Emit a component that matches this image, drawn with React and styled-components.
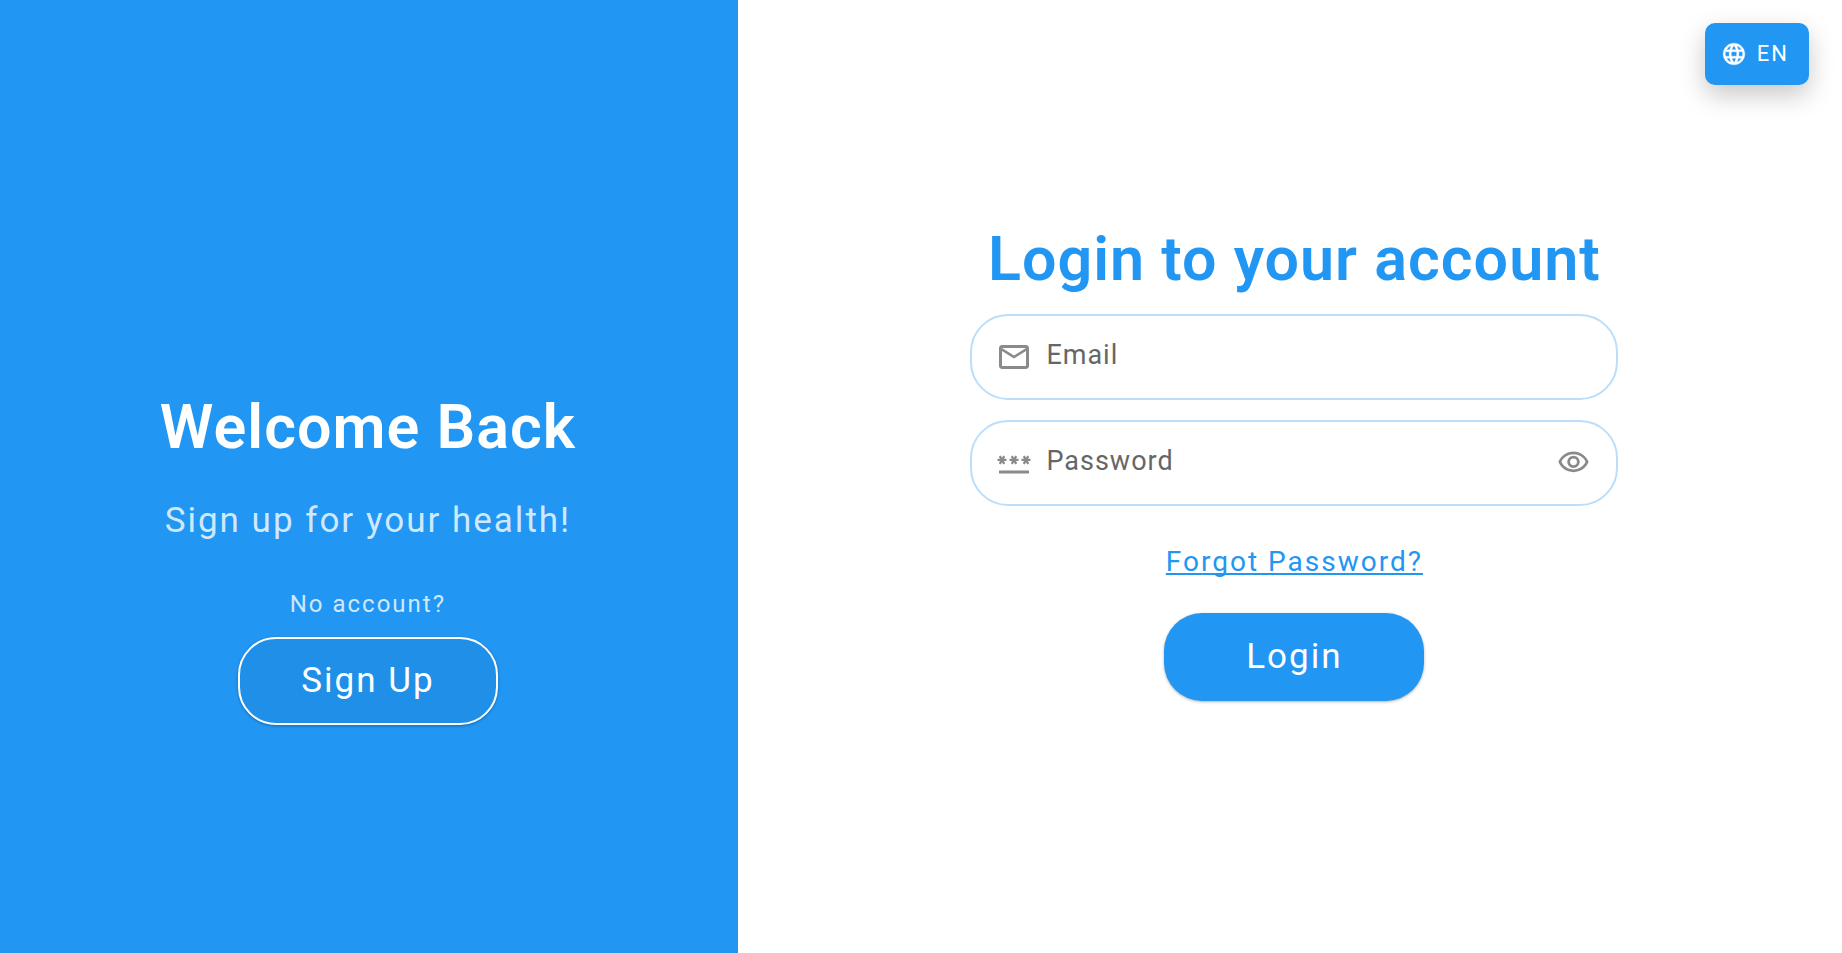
import React, { useState } from "react";
import styled, { createGlobalStyle } from "styled-components";
import { MdLanguage, MdMailOutline, MdPassword, MdOutlineVisibility } from "react-icons/md";

const GlobalStyle = createGlobalStyle`
  *, *::before, *::after { box-sizing: border-box; }
  body {
    margin: 0;
    background: #ffffff;
    font-family: Roboto, "Liberation Sans", sans-serif;
  }
  button, input { font-family: inherit; }
`;

const Page = styled.div`
  display: flex;
  min-height: 100vh;
`;

const WelcomePanel = styled.aside`
  flex: 0 0 calc(40% + 1px);
  display: flex;
  flex-direction: column;
  align-items: center;
  justify-content: center;
  padding: 163px 18px 0 16px;
  background: #2196f3;
  color: #ffffff;
`;

const LoginPanel = styled.main`
  flex: 1;
  display: flex;
  flex-direction: column;
  align-items: center;
  justify-content: center;
  padding: 0 16px 30px 25px;
`;

const Title = styled.h1`
  margin: 0;
  font-size: 61px;
  font-weight: 600;
  line-height: 72px;
  letter-spacing: 1px;
  text-align: center;
  color: ${(p) => p.$color};
`;

const Tagline = styled.p`
  margin: 38px 0 0;
  font-size: 35px;
  line-height: 40px;
  letter-spacing: 2px;
  color: rgba(255, 255, 255, 0.8);
`;

const Hint = styled.p`
  margin: 49px 0 19px;
  font-size: 24px;
  line-height: 28px;
  letter-spacing: 2px;
  color: rgba(255, 255, 255, 0.8);
`;

const PillButton = styled.button`
  width: 260px;
  height: 88px;
  padding: 0;
  border: ${(p) => (p.$outlined ? "2px solid #ffffff" : "0")};
  border-radius: 38px;
  background: ${(p) => (p.$outlined ? "#208fe7" : "#2196f3")};
  box-shadow: 0 1px 3px rgba(0, 0, 0, 0.3);
  color: #ffffff;
  font-size: 35px;
  line-height: 40px;
  letter-spacing: 2px;
  cursor: pointer;
`;

const Form = styled.form`
  display: flex;
  flex-direction: column;
  align-items: center;
  width: 100%;
  max-width: 648px;
  margin-top: 19px;
`;

const Fields = styled.div`
  display: flex;
  flex-direction: column;
  gap: 20px;
  width: 100%;
`;

const Field = styled.label`
  display: flex;
  align-items: center;
  gap: 14px;
  height: 86px;
  padding: 0 26px 0 24px;
  border: 2px solid #bbdefb;
  border-radius: 38px;
  color: #8a8a8a;
`;

const FieldInput = styled.input`
  flex: 1;
  min-width: 0;
  padding: 0 0 4px;
  border: 0;
  outline: 0;
  background: transparent;
  color: #212121;
  font-size: 27px;
  line-height: 32px;
  letter-spacing: 1px;
  &::placeholder { color: #666666; opacity: 1; }
`;

const RevealButton = styled.button`
  display: flex;
  padding: 0;
  border: 0;
  background: transparent;
  color: inherit;
  cursor: pointer;
`;

const ForgotLink = styled.a`
  margin: 40px 0 35px;
  color: #2196f3;
  font-size: 28px;
  line-height: 32px;
  letter-spacing: 2px;
  text-decoration: underline;
  text-decoration-thickness: 2px;
  text-decoration-skip-ink: none;
  text-underline-offset: 2px;
`;

const LanguageButton = styled.button`
  position: absolute;
  top: 23px;
  right: 33px;
  display: flex;
  align-items: center;
  gap: 10px;
  height: 62px;
  padding: 0 20px 0 16px;
  border: 0;
  border-radius: 10px;
  background: #2196f3;
  box-shadow: 0 10px 26px rgba(0, 0, 0, 0.22);
  color: #ffffff;
  font-size: 22px;
  line-height: 28px;
  letter-spacing: 2px;
  cursor: pointer;
`;

const GlobeIcon = styled(MdLanguage)`
  path:first-child { stroke: none; }
  path:last-child { stroke-width: 0.3; }
`;

export default function App() {
  const [revealed, setRevealed] = useState(false);

  return (
    <>
      <GlobalStyle />
      <Page>
        <WelcomePanel>
          <Title as="h2" $color="#ffffff">Welcome Back</Title>
          <Tagline>Sign up for your health!</Tagline>
          <Hint>No account?</Hint>
          <PillButton type="button" $outlined>Sign Up</PillButton>
        </WelcomePanel>
        <LoginPanel>
          <Title $color="#2196f3">Login to your account</Title>
          <Form onSubmit={(e) => e.preventDefault()}>
            <Fields>
              <Field htmlFor="email">
                <MdMailOutline size={36} aria-hidden="true" />
                <FieldInput id="email" type="email" placeholder="Email" aria-label="Email" />
              </Field>
              <Field htmlFor="password">
                <MdPassword size={36} aria-hidden="true" />
                <FieldInput
                  id="password"
                  type={revealed ? "text" : "password"}
                  placeholder="Password"
                  aria-label="Password"
                />
                <RevealButton
                  type="button"
                  aria-label="Show password"
                  aria-pressed={revealed}
                  onClick={() => setRevealed(!revealed)}
                >
                  <MdOutlineVisibility size={33} aria-hidden="true" />
                </RevealButton>
              </Field>
            </Fields>
            <ForgotLink href="#forgot">Forgot Password?</ForgotLink>
            <PillButton type="submit">Login</PillButton>
          </Form>
        </LoginPanel>
      </Page>
      <LanguageButton type="button" aria-label="Language: EN">
        <GlobeIcon size={26} aria-hidden="true" />
        EN
      </LanguageButton>
    </>
  );
}
